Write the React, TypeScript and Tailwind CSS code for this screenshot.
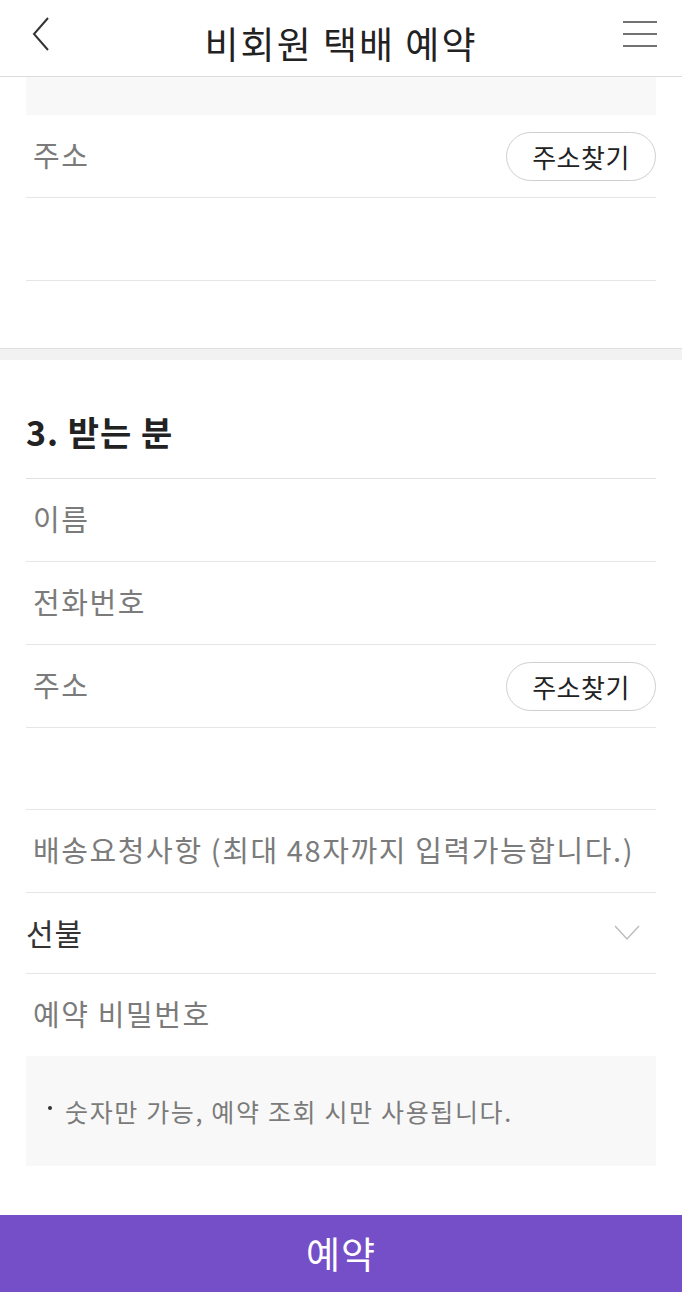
import React from "react";

const font = { fontFamily: '"Noto Sans CJK KR", "Noto Sans", sans-serif' };

function Row({ children, border = true, className = "" }: { children?: React.ReactNode; border?: boolean; className?: string }) {
  return (
    <div className={`h-[83px] flex items-center justify-between ${border ? "border-b border-[#e6e6e6]" : ""} ${className}`}>
      {children}
    </div>
  );
}

function Placeholder({ children }: { children: React.ReactNode }) {
  return <span className="pl-[7px] text-[29px] text-[#7b7b7b] leading-none tracking-[1.6px] -mt-[3px]">{children}</span>;
}

function FindButton() {
  return (
    <button className="h-[49px] w-[150px] rounded-full border border-[#cfcfcf] bg-white text-[26px] text-[#222] leading-none flex items-center justify-center tracking-[0.5px] pt-[2px]">
      주소찾기
    </button>
  );
}

export default function App() {
  return (
    <div className="w-[682px] h-[1292px] bg-white flex flex-col overflow-hidden" style={font}>
      <header className="h-[77px] shrink-0 border-b border-[#dcdcdc] flex items-center px-[30px] relative">
        <svg width="22" height="36" viewBox="0 0 22 36" className="absolute left-[30px] top-[16px]">
          <path d="M18 2 L4 18 L18 34" fill="none" stroke="#333" strokeWidth="2" />
        </svg>
        <h1 className="flex-1 text-center text-[37px] text-[#222] leading-none pt-[10px] tracking-[2px]">비회원 택배 예약</h1>
        <svg width="36" height="28" viewBox="0 0 36 28" className="absolute right-[23px] top-[20px]">
          <path d="M0 2 H34 M0 14 H34 M0 26 H34" fill="none" stroke="#444" strokeWidth="1.6" />
        </svg>
      </header>

      <div className="px-[26px]">
        <div className="h-[38px] bg-[#f8f8f8]" />
        <Row>
          <Placeholder>주소</Placeholder>
          <FindButton />
        </Row>
        <Row />
      </div>

      <div className="h-[67px] shrink-0" />
      <div className="h-[12px] shrink-0 bg-[#f2f2f2] border-t border-[#dedede]" />

      <div className="px-[26px]">
        <div className="h-[119px] flex items-center pt-[26px] border-b border-[#e0e0e0]">
          <h2 className="text-[34px] font-bold text-[#222] leading-none tracking-[1px]">3. 받는 분</h2>
        </div>
        <Row>
          <Placeholder>이름</Placeholder>
        </Row>
        <Row>
          <Placeholder>전화번호</Placeholder>
        </Row>
        <Row>
          <Placeholder>주소</Placeholder>
          <FindButton />
        </Row>
        <Row className="!h-[82px]" />
        <Row>
          <Placeholder>배송요청사항 (최대 48자까지 입력가능합니다.)</Placeholder>
        </Row>
        <Row className="!h-[81px]">
          <span className="text-[30px] text-[#333] leading-none tracking-[1px] -mt-[3px]">선불</span>
          <svg width="26" height="16" viewBox="0 0 26 16" className="mr-[16px]">
            <path d="M1 1 L13 14 L25 1" fill="none" stroke="#bdbdbd" strokeWidth="1.5" />
          </svg>
        </Row>
        <Row border={false} className="!h-[82px]">
          <Placeholder>예약 비밀번호</Placeholder>
        </Row>
        <div className="h-[110px] bg-[#f8f8f8] flex items-center pl-[22px]">
          <span className="text-[25px] text-[#7b7b7b] leading-none flex items-center tracking-[1.65px]">
            <span className="inline-block w-[4px] h-[4px] rounded-full bg-[#333] mr-[13px] -mt-[6px]" />
            숫자만 가능, 예약 조회 시만 사용됩니다.
          </span>
        </div>
      </div>

      <div className="h-[49px] shrink-0" />
      <button className="h-[77px] shrink-0 bg-[#754fc8] text-white text-[37px] leading-none flex items-center justify-center tracking-[1px]">
        예약
      </button>
    </div>
  );
}
